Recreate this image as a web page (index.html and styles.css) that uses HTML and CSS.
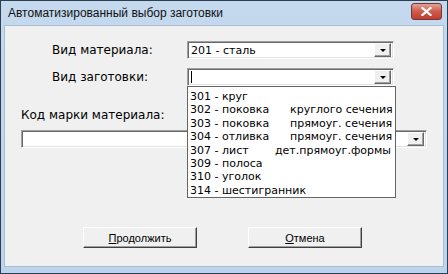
FILE: index.html
```html
<!DOCTYPE html>
<html>
<head>
<meta charset="utf-8">
<link rel="stylesheet" href="styles.css">
</head>
<body>
<div class="window">
  <div class="titlebar">
    <span class="title">Автоматизированный выбор заготовки</span>
    <span class="close"><svg width="11" height="9" viewBox="0 0 11 9"><path d="M1.5 1 L9.5 8 M9.5 1 L1.5 8" stroke="#fff" stroke-width="2.2" stroke-linecap="square"/></svg></span>
  </div>
  <div class="client">
    <div class="row">
      <span class="label">Вид материала:</span>
      <div class="combo short"><span class="value">201 - сталь</span><span class="btn"><i class="tri"></i></span></div>
    </div>
    <div class="row second">
      <span class="label">Вид заготовки:</span>
      <div class="combo short"><span class="value"><i class="caret"></i></span><span class="btn"><i class="tri"></i></span>
        <div class="list">
          <div class="item">301 - круг</div>
          <div class="item"><span class="c1">302 - поковка</span>круглого сечения</div>
          <div class="item"><span class="c1">303 - поковка</span>прямоуг. сечения</div>
          <div class="item"><span class="c1">304 - отливка</span>прямоуг. сечения</div>
          <div class="item"><span class="c1 narrow">307 - лист</span>дет.прямоуг.формы</div>
          <div class="item">309 - полоса</div>
          <div class="item">310 - уголок</div>
          <div class="item">314 - шестигранник</div>
        </div>
      </div>
    </div>
    <div class="label3">Код марки материала:</div>
    <div class="combo wide"><span class="value"></span><span class="btn"><i class="tri"></i></span></div>
    <div class="buttons">
      <button class="pbtn"><u>П</u>родолжить</button>
      <button class="pbtn"><u>О</u>тмена</button>
    </div>
  </div>
</div>
</body>
</html>
```
FILE: styles.css
```css
html, body { margin: 0; padding: 0; }
body { width: 448px; height: 274px; overflow: hidden; background: #fff; }
.window {
  box-sizing: border-box;
  width: 448px; height: 274px;
  border: 1px solid #2c3e50;
  background: linear-gradient(#c4d9ee, #bcd4ec);
  display: flex; flex-direction: column;
}
.titlebar {
  height: 24px; flex: none;
  display: flex; align-items: center; justify-content: space-between;
  padding: 0 5px 0 7px;
}
.title { font: 12px "Liberation Sans", sans-serif; color: #111; }
.close {
  width: 29px; height: 15px; margin-top: -3px;
  border: 1px solid #6e3a36; border-radius: 3px;
  background: linear-gradient(#e3a394, #cf5a4c 50%, #c03e30);
  display: flex; align-items: center; justify-content: center;
}
.client {
  flex: 1;
  margin: 0 3px 6px 3px;
  border: 1px solid #a9bed3;
  background: #f0f0f0;
  display: flex; flex-direction: column;
  font-family: "DejaVu Sans", sans-serif;
  position: relative;
}
.row { display: flex; align-items: center; padding-left: 47px; margin-top: 15px; }
.row.second { margin-top: 9px; }
.label { width: 135px; font-size: 12px; color: #000; }
.combo {
  position: relative;
  box-sizing: border-box;
  height: 18px;
  border: 1px solid;
  border-color: #a0a0a0 #fff #fff #a0a0a0;
  box-shadow: inset 1px 1px 0 #696969, inset -1px -1px 0 #e3e3e3;
  background: #fff;
  display: flex; align-items: center; justify-content: space-between;
}
.combo.short { width: 207px; }
.combo.wide { width: 406px; margin-left: 16px; margin-top: 7px; }
.value { font-size: 11px; padding-left: 3px; display: flex; align-items: center; height: 14px; }
.caret { display: block; width: 1px; height: 12px; background: #000; }
.btn {
  box-sizing: border-box;
  width: 17px; height: 14px; margin-right: 2px;
  background: #f0f0f0;
  border: 1px solid; border-color: #fff #696969 #696969 #fff;
  box-shadow: inset -1px -1px 0 #a0a0a0;
  display: flex; align-items: center; justify-content: center;
}
.tri { display: block; width: 0; height: 0; border-left: 3px solid transparent; border-right: 3px solid transparent; border-top: 3.5px solid #000; }
.list {
  position: absolute; left: -1px; top: 17px; z-index: 2;
  box-sizing: border-box;
  width: 209px; height: 112px;
  border: 1px solid #646464;
  background: #fff;
  padding: 3px 0 0 2px;
  overflow: hidden;
}
.item { font-size: 11px; line-height: 13.4px; white-space: nowrap; color: #000; }
.c1 { display: inline-block; width: 100px; }
.c1.narrow { width: 85px; }
.label3 { font-size: 12px; margin: 22px 0 0 16px; line-height: 15px; }
.buttons { display: flex; gap: 51px; margin: 79px 0 0 78px; }
.pbtn {
  box-sizing: border-box;
  width: 114px; height: 21px;
  background: #f0f0f0;
  border: 1px solid; border-color: #fff #404040 #404040 #fff;
  box-shadow: inset -1px -1px 0 #a0a0a0;
  font: 11px "Liberation Sans", sans-serif; color: #000;
  padding: 0;
}
```
